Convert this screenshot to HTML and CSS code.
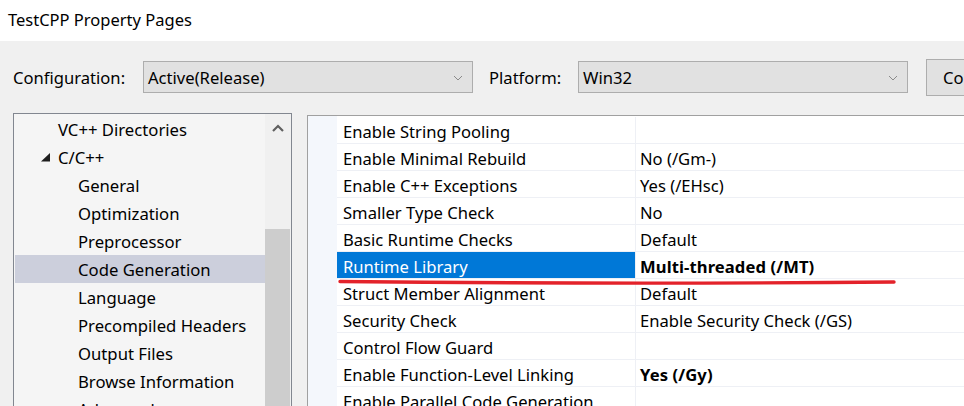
FILE: index.html
```html
<!DOCTYPE html>
<html>
<head>
<meta charset="utf-8">
<link rel="stylesheet" href="styles.css">
</head>
<body>
<div class="window">
  <div class="titlebar">TestCPP Property Pages</div>
  <div class="toolbar">
    <span class="lbl lbl-config">Configuration:</span>
    <div class="combo"><span>Active(Release)</span>
      <svg class="chev" width="10" height="6" viewBox="0 0 10 6"><path d="M1 1 L5 5 L9 1" fill="none" stroke="#8a8a8a" stroke-width="1"/></svg>
    </div>
    <span class="lbl lbl-platform">Platform:</span>
    <div class="combo"><span>Win32</span>
      <svg class="chev" width="10" height="6" viewBox="0 0 10 6"><path d="M1 1 L5 5 L9 1" fill="none" stroke="#8a8a8a" stroke-width="1"/></svg>
    </div>
    <div class="button">Configuration Manager...</div>
  </div>
  <div class="main">
    <div class="tree-panel">
      <div class="tree">
        <div class="node lvl1">VC++ Directories</div>
        <div class="node lvl1 expander"><svg class="tri" width="9" height="9" viewBox="0 0 9 9"><polygon points="0,8.5 9,8.5 9,0" fill="#1e1e1e"/></svg>C/C++</div>
        <div class="node lvl2">General</div>
        <div class="node lvl2">Optimization</div>
        <div class="node lvl2">Preprocessor</div>
        <div class="node lvl2 selected">Code Generation</div>
        <div class="node lvl2">Language</div>
        <div class="node lvl2">Precompiled Headers</div>
        <div class="node lvl2">Output Files</div>
        <div class="node lvl2">Browse Information</div>
        <div class="node lvl2">Advanced</div>
      </div>
      <div class="scrollbar">
        <div class="arrow"><svg width="12" height="8" viewBox="0 0 12 8"><path d="M1 7 L6 2 L11 7" fill="none" stroke="#606060" stroke-width="2.2"/></svg></div>
        <div class="thumb"></div>
      </div>
    </div>
    <div class="grid-panel">
      <div class="gutter"></div>
      <div class="grid">
        <div class="row"><div class="name">Enable String Pooling</div><div class="val"></div></div>
        <div class="row"><div class="name">Enable Minimal Rebuild</div><div class="val">No (/Gm-)</div></div>
        <div class="row"><div class="name">Enable C++ Exceptions</div><div class="val">Yes (/EHsc)</div></div>
        <div class="row"><div class="name">Smaller Type Check</div><div class="val">No</div></div>
        <div class="row"><div class="name">Basic Runtime Checks</div><div class="val">Default</div></div>
        <div class="row active"><div class="name">Runtime Library</div><div class="val bold">Multi-threaded (/MT)</div></div>
        <div class="row"><div class="name">Struct Member Alignment</div><div class="val">Default</div></div>
        <div class="row"><div class="name">Security Check</div><div class="val">Enable Security Check (/GS)</div></div>
        <div class="row"><div class="name">Control Flow Guard</div><div class="val"></div></div>
        <div class="row"><div class="name">Enable Function-Level Linking</div><div class="val bold">Yes (/Gy)</div></div>
        <div class="row"><div class="name">Enable Parallel Code Generation</div><div class="val"></div></div>
      </div>
    </div>
  </div>
  <svg class="annot" width="570" height="10" viewBox="0 0 570 10"><path d="M3 3.5 Q 280 6.5 557 4" fill="none" stroke="#e3222a" stroke-width="3.4" stroke-linecap="round"/></svg>
</div>
</body>
</html>
```
FILE: styles.css
```css
html, body {
  margin: 0;
  padding: 0;
}
body {
  width: 964px;
  height: 406px;
  overflow: hidden;
  background: #f0f0f0;
  font-family: "Noto Sans", "Open Sans", sans-serif;
  color: #000;
}
.window {
  position: relative;
  width: 964px;
  height: 406px;
  overflow: hidden;
}
.titlebar {
  height: 41px;
  line-height: 40px;
  background: #fff;
  padding-left: 8px;
  font-size: 16.5px;
  white-space: nowrap;
}
.toolbar {
  display: flex;
  align-items: center;
  height: 32px;
  padding: 20px 0 0 13px;
  font-size: 16.6px;
  white-space: nowrap;
}
.lbl-config { width: 130px; flex: none; padding-top: 1px; }
.lbl-platform { width: 89px; margin-left: 16px; flex: none; padding-top: 1px; }
.combo {
  flex: none;
  box-sizing: border-box;
  width: 330px;
  height: 32px;
  border: 1px solid #adadad;
  background: #e1e1e1;
  display: flex;
  align-items: center;
  justify-content: space-between;
  padding: 0 9px 0 4px;
}
.combo span { line-height: 30px; padding-top: 1px; }
.chev { flex: none; margin-top: 1px; }
.button {
  flex: none;
  box-sizing: border-box;
  margin-left: 18px;
  height: 37px;
  width: 200px;
  border: 1px solid #adadad;
  background: #e1e1e1;
  line-height: 35px;
  padding-left: 16px;
  overflow: hidden;
}
.main {
  display: flex;
  gap: 15px;
  padding-left: 13px;
  margin-top: 20px;
}
.tree-panel {
  flex: none;
  box-sizing: border-box;
  width: 279px;
  height: 400px;
  border: 1px solid #828790;
  background: #f5f5f5;
  display: flex;
}
.tree {
  width: 251px;
  padding-top: 1px;
  font-size: 16.7px;
  white-space: nowrap;
}
.node {
  box-sizing: border-box;
  height: 28px;
  line-height: 26px;
  padding-top: 2px;
  margin-left: 1px;
  display: flex;
  align-items: center;
}
.lvl1 { padding-left: 43px; }
.lvl2 { padding-left: 63px; }
.expander { padding-left: 26px; }
.tri { margin-right: 8px; margin-top: -1px; }
.node.selected { background: #cccfdc; }
.scrollbar {
  position: relative;
  width: 26px;
  background: #f0f0f0;
}
.arrow {
  height: 28px;
  display: flex;
  justify-content: center;
  align-items: center;
  padding-right: 1px;
}
.thumb {
  position: absolute;
  left: 0;
  top: 115px;
  width: 25px;
  height: 300px;
  background: #cdcdcd;
}
.grid-panel {
  flex: none;
  width: 700px;
  height: 400px;
  margin-top: 2px;
  border-left: 1px solid #a0a0a0;
  border-top: 1px solid #a0a0a0;
  background: #fff;
  display: flex;
}
.gutter {
  width: 29px;
  flex: none;
  background: #f4f7fc;
}
.grid {
  flex: 1;
  padding-top: 1px;
  font-size: 16.6px;
  white-space: nowrap;
}
.row {
  display: grid;
  grid-template-columns: 298px 1fr;
  height: 26px;
  border-bottom: 1px solid #eef0f5;
}
.name, .val {
  padding-top: 3px;
  line-height: 23px;
}
.name { padding-left: 6px; }
.val {
  border-left: 1px solid #eef0f5;
  padding-left: 4px;
}
.row.active .name {
  background: #0078d7;
  color: #fff;
}
.bold { font-weight: 700; letter-spacing: 0.1px; }
.annot {
  position: absolute;
  left: 337px;
  top: 278px;
}
```
